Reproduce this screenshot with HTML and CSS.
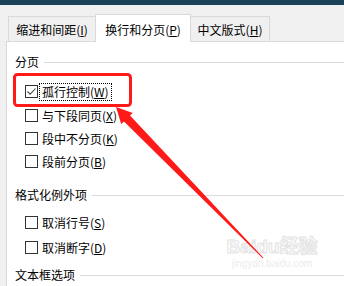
FILE: index.html
```html
<!DOCTYPE html>
<html lang="zh">
<head>
<meta charset="utf-8">
<link rel="stylesheet" href="styles.css">
</head>
<body>
<div class="topbar"></div>
<div class="tabs">
  <div class="tab tab-a">缩进和间距(<u>I</u>)</div>
  <div class="tab tab-active">换行和分页(<u>P</u>)</div>
  <div class="tab tab-c">中文版式(<u>H</u>)</div>
</div>
<div class="panel">
  <div class="group-label gl-1">分页</div>
  <div class="check row-1">
    <span class="box"><svg viewBox="0 0 11 11" width="11" height="11"><polyline points="1.5,5.5 4.2,8.2 9.5,2.5" fill="none" stroke="#4a4a4a" stroke-width="1.1"/></svg></span>
    <span class="lbl focus">孤行控制(<u>W</u>)</span>
  </div>
  <div class="check row-2"><span class="box"></span><span class="lbl">与下段同页(<u>X</u>)</span></div>
  <div class="check"><span class="box"></span><span class="lbl">段中不分页(<u>K</u>)</span></div>
  <div class="check"><span class="box"></span><span class="lbl">段前分页(<u>B</u>)</span></div>
  <div class="group-label gl-2">格式化例外项</div>
  <div class="check row-5"><span class="box"></span><span class="lbl">取消行号(<u>S</u>)</span></div>
  <div class="check row-6"><span class="box"></span><span class="lbl">取消断字(<u>D</u>)</span></div>
  <div class="group-label gl-3">文本框选项</div>
</div>
<div class="watermark">
  <div class="wm-main">Baidu经验</div>
  <div class="wm-sub">jingyan.baidu.com</div>
</div>
<svg class="overlay" viewBox="0 0 344 286" width="344" height="286">
  <rect x="14.5" y="74.5" width="116" height="31" rx="3" ry="3" fill="none" stroke="#ff1a1a" stroke-width="3"/>
  <polygon fill="#ff1a1a" points="116,107 132.8,113 130,115.6 263.4,257.7 262.6,258.3 124,121.4 121.2,124"/>
</svg>
</body>
</html>
```
FILE: styles.css
```css
html, body {
  margin: 0;
  padding: 0;
}
body {
  width: 344px;
  height: 286px;
  overflow: hidden;
  position: relative;
  background: #f0f0f0;
  font-family: "Noto Sans CJK SC", "Microsoft YaHei", sans-serif;
  font-size: 12px;
  color: #000;
}
.topbar {
  height: 5px;
  background: #1b4258;
}
.tabs {
  display: flex;
  align-items: flex-end;
  height: 27px;
  margin-top: 9px;
  padding-left: 8px;
}
.tab {
  box-sizing: border-box;
  height: 25px;
  border: 1px solid #d9d9d9;
  border-bottom: none;
  background: #f0f0f0;
  display: flex;
  align-items: flex-end;
  justify-content: center;
  padding-bottom: 3px;
  line-height: 16px;
  white-space: nowrap;
}
.tab-a {
  width: 87px;
  border-right: none;
}
.tab-active {
  width: 96px;
  height: 28px;
  background: #fff;
  margin-bottom: -1px;
  padding-bottom: 4px;
  position: relative;
  z-index: 1;
}
.tab-c {
  width: 79px;
  border-left: none;
}
.panel {
  box-sizing: border-box;
  margin-left: 6px;
  height: 245px;
  border-left: 1px solid #d9d9d9;
  border-top: 1px solid #d9d9d9;
  background: #fff;
  padding-left: 8px;
  overflow: hidden;
}
.group-label {
  display: flex;
  align-items: center;
  height: 18px;
  line-height: 18px;
  white-space: nowrap;
}
.group-label::after {
  content: "";
  flex: 1;
  height: 1px;
  background: #dadada;
  margin-left: 5px;
}
.gl-1 { margin-top: 11px; }
.gl-2 { margin-top: 13px; }
.gl-3 { margin-top: 7px; }
.check {
  display: flex;
  align-items: center;
  height: 23px;
  padding-left: 10px;
  white-space: nowrap;
}
.row-1 { margin-top: 9px; margin-bottom: 1px; }
.row-5 { margin-top: 7px; }
.row-6 { margin-top: 2px; }
.box {
  box-sizing: border-box;
  width: 13px;
  height: 13px;
  border: 1px solid #333;
  background: #fff;
  margin-right: 1px;
  display: flex;
  align-items: center;
  justify-content: center;
}
.box svg { display: block; }
.lbl {
  border: 1px dotted transparent;
  padding: 0 2px;
  line-height: 16px;
}
.lbl.focus {
  border-color: #000;
}
u {
  text-decoration: underline;
  text-underline-offset: 1px;
}
.watermark {
  position: absolute;
  left: 226px;
  top: 236px;
  width: 92px;
  text-align: center;
  font-family: "Liberation Sans", "Noto Sans CJK SC", sans-serif;
  color: #fff;
  pointer-events: none;
}
.wm-main {
  font-size: 19px;
  font-weight: bold;
  line-height: 22px;
  -webkit-text-stroke: 1px #e2e2e2;
  letter-spacing: 0;
}
.wm-sub {
  font-size: 10px;
  line-height: 12px;
  color: #ececec;
}
.overlay {
  position: absolute;
  left: 0;
  top: 0;
  pointer-events: none;
  z-index: 5;
}
```
